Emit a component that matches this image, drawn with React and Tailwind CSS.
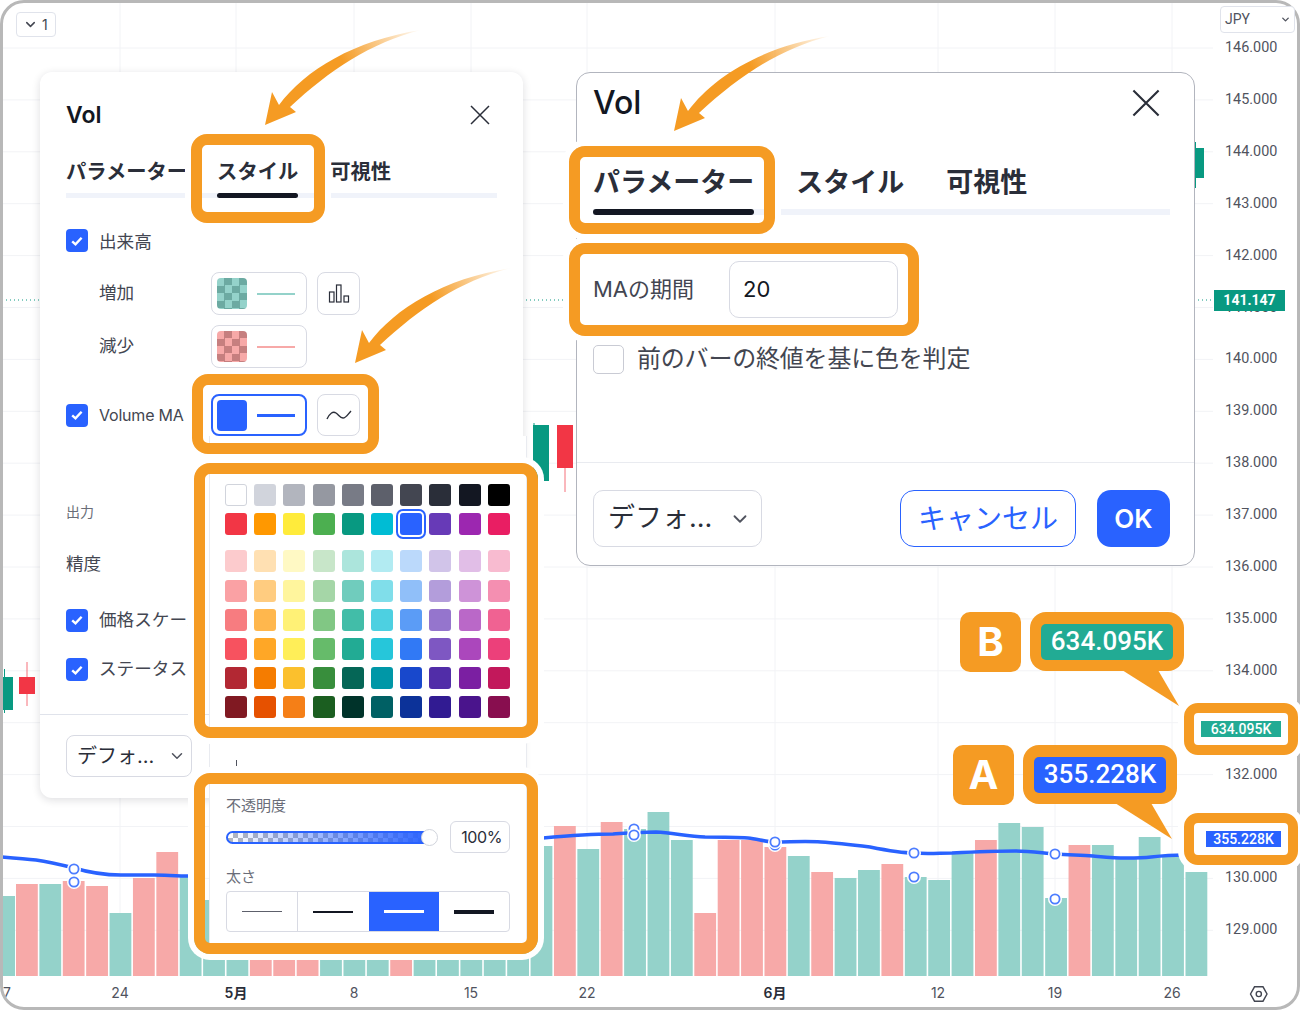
import { ChevronDown } from "lucide-react";

const ORANGE = "#f59b23";

const prices = ["146", "145", "144", "143", "142", "141", "140", "139", "138", "137", "136", "135", "134", "133", "132", "131", "130", "129"];
const hiddenPrices = ["133", "131"]; // sit under the axis highlights
const timeLabels = [
  [7, "7"], [120, "24"], [236, "5月", true], [354, "8"], [471, "15"], [587, "22"],
  [775, "6月", true], [938, "12"], [1055, "19"], [1172, "26"],
];
const gridX = [120, 236, 354, 471, 587, 775, 938, 1055, 1172];

// volume bars: [top y, red?]
const bars = [
  [896, 0], [884, 1], [884, 0], [881, 1], [886, 1], [913, 0], [878, 1], [852, 1], [876, 0], [900, 0],
  [900, 0], [900, 1], [900, 1], [900, 1], [900, 0], [900, 0], [900, 0], [900, 1], [900, 0], [900, 0],
  [900, 0], [900, 0], [900, 0], [846, 0], [826, 1], [849, 0], [822, 1], [829, 0], [812, 0], [840, 0],
  [913, 1], [840, 1], [840, 1], [847, 1], [856, 0], [872, 1], [878, 0], [870, 0], [864, 1], [877, 0],
  [880, 0], [853, 0], [840, 1], [823, 0], [827, 0], [898, 0], [845, 1], [845, 0], [857, 0], [837, 0],
  [857, 0], [872, 0],
];

const maLeft = "M2 857 C14 858 26 859 36 860 C50 862 62 865 74 868 C84 871 100 875 121 875 C134 875 145 875 154 875 C165 875 176 876 190 876";
const maRight = "M543 838 C565 836 590 834 613 834 C628 833 642 832 656 832 C672 833 688 836 705 837 C720 837 735 837 748 838 C758 839 766 842 775 842 C790 842 806 841 821 842 C838 843 854 845 870 847 C885 850 900 853 914 853 C928 854 940 853 952 853 C972 852 995 851 1015 851 C1030 851 1042 853 1056 854 C1070 855 1082 855 1093 856 C1105 857 1115 858 1126 858 C1135 858 1143 858 1151 857 C1160 856 1170 855 1184 855";
const maDots = [[74, 869], [74, 882], [634, 829], [634, 835], [775, 845], [775, 842], [914, 853], [914, 877], [1055, 854], [1055, 899]];

const palette = [
  ["#ffffff", "#d1d4dc", "#b2b5be", "#9598a1", "#787b86", "#5d606b", "#434651", "#2a2e39", "#131722", "#000000"],
  ["#f23645", "#ff9800", "#ffeb3b", "#4caf50", "#089981", "#00bcd4", "#2962ff", "#673ab7", "#9c27b0", "#e91e63"],
  ["#fccbcd", "#ffe0b2", "#fff9c4", "#c8e6c9", "#ace5dc", "#b2ebf2", "#bbd9fb", "#d1c4e9", "#e1bee7", "#f8bbd0"],
  ["#faa1a4", "#ffcc80", "#fff59d", "#a5d6a7", "#70ccbd", "#80deea", "#90bff9", "#b39ddb", "#ce93d8", "#f48fb1"],
  ["#f77c80", "#ffb74d", "#fff176", "#81c784", "#42bda8", "#4dd0e1", "#5b9cf6", "#9575cd", "#ba68c8", "#f06292"],
  ["#f7525f", "#ffa726", "#ffee58", "#66bb6a", "#22ab94", "#26c6da", "#3179f5", "#7e57c2", "#ab47bc", "#ec407a"],
  ["#b22833", "#f57c00", "#fbc02d", "#388e3c", "#056656", "#0097a7", "#1848cc", "#512da8", "#7b1fa2", "#c2185b"],
  ["#801922", "#e65100", "#f57f17", "#1b5e20", "#00332a", "#006064", "#0c3299", "#311b92", "#4a148c", "#880e4f"],
];

function Chart() {
  return (
    <svg className="absolute inset-0" width="1300" height="1010" viewBox="0 0 1300 1010">
      {prices.map((p, i) => (
        <line key={p} x1="2" x2="1213" y1={48 + i * 51.9} y2={48 + i * 51.9} stroke="#f2f3f6" />
      ))}
      {gridX.map((x) => (
        <line key={x} x1={x} x2={x} y1="2" y2="976" stroke="#f2f3f6" />
      ))}
      <line x1="2" x2="1213" y1="300" y2="300" stroke="#089981" strokeDasharray="1 3" />

      {/* candles */}
      <path d="M4.5 669V713M534 423V481M1195.5 142V188" stroke="#089981" />
      <rect x="3" y="677" width="10" height="33" fill="#089981" />
      <rect x="533" y="425" width="16" height="56" fill="#089981" />
      <rect x="1196" y="148" width="8" height="30" fill="#089981" />
      <path d="M27 662V706M565 425V492" stroke="#f23645" opacity="0.7" />
      <rect x="19" y="677" width="16" height="17" fill="#f23645" />
      <rect x="557" y="425" width="16" height="43" fill="#f23645" />

      {/* volume */}
      {bars.map(([top, red], i) => {
        const x = i === 0 ? 2.5 : 16 + (i - 1) * 23.39;
        const w = i === 0 ? 12.5 : 21.8;
        return <rect key={i} x={x} y={top} width={w} height={976 - top} fill={red ? "#f7a9a8" : "#94d2ca"} />;
      })}
      <path d={maLeft} fill="none" stroke="#2962ff" strokeWidth="3.5" />
      <path d={maRight} fill="none" stroke="#2962ff" strokeWidth="3.5" />
      {maDots.map(([x, y], i) => (
        <g key={i}>
          <circle cx={x} cy={y} r="7" fill="#fff" />
          <circle cx={x} cy={y} r="4.6" fill="#fff" stroke="#4d7dff" strokeWidth="1.8" />
        </g>
      ))}

      {timeLabels.map(([x, t, bold]) => (
        <text key={t} x={x} y="998" textAnchor="middle" fontSize="14" fontWeight={bold ? 600 : 400} fill={bold ? "#2a2e39" : "#50535e"}>
          {t}
        </text>
      ))}
      <path d="M1250.5 994L1254.5 986.8H1263L1267 994L1263 1001.2H1254.5Z" fill="none" stroke="#434651" strokeWidth="1.4" />
      <circle cx="1258.8" cy="994" r="2.6" fill="none" stroke="#434651" strokeWidth="1.4" />
    </svg>
  );
}

function Arrow({ className }) {
  return (
    <svg className={`absolute z-30 ${className}`} width="162" height="102" viewBox="0 0 162 102">
      <defs>
        <linearGradient id="arrowFade" gradientUnits="userSpaceOnUse" x1="40" y1="60" x2="160" y2="3">
          <stop offset="0" stopColor={ORANGE} />
          <stop offset="0.35" stopColor={ORANGE} />
          <stop offset="1" stopColor={ORANGE} stopOpacity="0" />
        </linearGradient>
      </defs>
      <path d="M2 98L9 65L16 78C42 43 92 13 158 3C107 16 67 43 27 80L33 85Z" fill="url(#arrowFade)" />
    </svg>
  );
}

function Highlight({ className }) {
  return (
    <div className={`absolute z-20 rounded-[16px] border-[11px] border-[#f59b23] shadow-[0_0_0_6px_white] pointer-events-none ${className}`} />
  );
}

function Check() {
  return (
    <span className="flex w-[22px] h-[23px] shrink-0 items-center justify-center rounded-[4px] bg-[#2962ff]">
      <svg width="16" height="16" viewBox="0 0 16 16">
        <path d="M3.2 8.4L6.5 11.4L12.6 4.8" fill="none" stroke="#fff" strokeWidth="2.4" />
      </svg>
    </span>
  );
}

function CloseIcon({ size }) {
  return (
    <svg width={size} height={size} viewBox="0 0 20 20">
      <path d="M1 1L19 19M19 1L1 19" stroke="#2a2e39" strokeWidth="1.5" fill="none" />
    </svg>
  );
}

function ColorButton({ dark, light, line }) {
  return (
    <div className="flex w-[96px] h-[43px] items-center rounded-[8px] border border-[#d8dae3] pl-[5px]">
      <span
        className="w-[30px] h-[31px] rounded-[4px] bg-size-[15px_15px]"
        style={{ backgroundImage: `conic-gradient(${dark} 25%, ${light} 0 50%, ${dark} 0 75%, ${light} 0)` }}
      />
      <span className="ml-[10px] w-[38px] h-[2px]" style={{ backgroundColor: line }} />
    </div>
  );
}

function LeftDialog() {
  return (
    <div className="absolute left-[40px] top-[72px] w-[483px] h-[726px] rounded-[12px] bg-white shadow-[0_2px_8px_rgba(19,23,34,0.14)] pl-[26px] pr-[26px] pt-[23px] text-[#434651]">
      <div className="flex h-[40px] items-center justify-between pr-[7px]">
        <span className="text-[23px] font-semibold text-[#131722]">Vol</span>
        <CloseIcon size={20} />
      </div>

      <div className="relative mt-[20px] flex h-[43px] gap-[30px] border-b-[5px] border-[#f0f3fa] text-[20.3px] font-bold text-[#2a2e39]">
        <span className="leading-[34px]">パラメーター</span>
        <span className="relative leading-[34px]">
          スタイル
          <span className="absolute left-0 right-0 top-[38px] h-[5px] rounded-full bg-[#131722]" />
          <Highlight className="-left-[26px] -right-[27px] -top-[21px] h-[89px]" />
        </span>
        <span className="ml-[2px] leading-[34px]">可視性</span>
      </div>

      <div className="mt-[31px] flex h-[23px] items-center gap-[11px] text-[17.6px]">
        <Check />
        <span className="mt-[3px]">出来高</span>
      </div>

      <div className="mt-[20px] ml-[33px] flex items-center text-[17.6px]">
        <span className="w-[112px]">増加</span>
        <ColorButton dark="#6caaa2" light="#94d2ca" line="#94d2ca" />
        <div className="ml-[10px] flex w-[43px] h-[43px] items-center justify-center rounded-[8px] border border-[#d8dae3]">
          <svg width="22" height="20" viewBox="0 0 22 20" fill="none" stroke="#2a2e39" strokeWidth="1.2">
            <rect x="1.5" y="8" width="4.5" height="10" />
            <rect x="8.5" y="1" width="4.5" height="17" />
            <rect x="16" y="12" width="4.5" height="6" />
          </svg>
        </div>
      </div>

      <div className="mt-[10px] ml-[33px] flex items-center text-[17.6px]">
        <span className="w-[112px]">減少</span>
        <ColorButton dark="#c67f7f" light="#f7a9a8" line="#f7a9a8" />
      </div>

      <div className="relative mt-[26px] flex items-center">
        <Check />
        <span className="ml-[11px] w-[112px] text-[16px] tracking-[-0.2px]">Volume MA</span>
        <div className="flex w-[96px] h-[42px] items-center rounded-[8px] border-2 border-[#2962ff] pl-[4px]">
          <span className="w-[30px] h-[31px] rounded-[4px] bg-[#2962ff]" />
          <span className="ml-[10px] w-[38px] h-[3px] bg-[#2962ff]" />
        </div>
        <div className="ml-[10px] flex w-[43px] h-[42px] items-center justify-center rounded-[8px] border border-[#d8dae3]">
          <svg width="26" height="14" viewBox="0 0 26 14" fill="none" stroke="#2a2e39" strokeWidth="1.4">
            <path d="M1 11C4 5 7 3 10 5C13 7 14 10 17 10C20 10 22 6 25 3" />
          </svg>
        </div>
        <Highlight className="left-[126px] top-[-20px] w-[187px] h-[80px]" />
      </div>

      <div className="mt-[66px] text-[14px] leading-[20px] text-[#6a6d78]">出力</div>
      <div className="mt-[30px] text-[17.6px] leading-[24px]">精度</div>

      <div className="mt-[31px] flex items-center gap-[11px] text-[17.6px]">
        <Check />
        <span className="w-[89px] overflow-hidden whitespace-nowrap">価格スケール</span>
      </div>
      <div className="mt-[23px] flex items-center gap-[11px] text-[17.6px]">
        <Check />
        <span className="w-[89px] overflow-hidden whitespace-nowrap">ステータスライン</span>
      </div>

      <div className="-mx-[26px] mt-[31px] h-px bg-[#e0e3eb]" />

      <div className="mt-[20px] flex w-[126px] h-[42px] items-center justify-between rounded-[8px] border border-[#d8dae3] pl-[10px] pr-[5px] text-[20px] text-[#2a2e39]">
        <span>デフォ...</span>
        <ChevronDown size={18} color="#50535e" />
      </div>
    </div>
  );
}

function ColorPopup() {
  return (
    <div className="absolute z-10 left-[209px] top-[436px] w-[318px] h-[507px] border-x border-[#e9ebf0] bg-white pl-[16px] pt-[48px] text-[#6a6d78]">
      <div className="-ml-px grid grid-cols-[repeat(10,22px)] gap-x-[7.2px] gap-y-[7.2px]">
        {palette.map((row, r) =>
          row.map((c) => (
            <span
              key={`${r}${c}`}
              className={`w-[22px] h-[22px] rounded-[3px] ${c === "#ffffff" ? "border border-[#d1d4dc]" : ""} ${c === "#2962ff" ? "ring-2 ring-[#2962ff] ring-offset-2" : ""} ${r === 2 ? "mt-[8px]" : ""}`}
              style={{ backgroundColor: c }}
            />
          ))
        )}
      </div>

      <div className="ml-[10px] mt-[42px] w-px h-[6px] bg-[#50535e]" />

      <div className="mt-[30px] text-[15px] leading-[20px]">不透明度</div>
      <div className="mt-[5px] flex h-[32px] w-[284px] items-center justify-between">
        <div className="relative h-[13px] w-[208px] rounded-full border-2 border-[#2962ff] bg-[linear-gradient(to_right,#2962ff00,#2962ff),conic-gradient(#b5b8c0_25%,#fff_0_50%,#b5b8c0_0_75%,#fff_0)] bg-size-[100%_100%,10px_10px]">
          <span className="absolute -right-[6px] -top-[4px] w-[17px] h-[17px] rounded-full border border-[#d1d4dc] bg-white" />
        </div>
        <div className="flex w-[60px] h-[32px] items-center justify-end rounded-[6px] border border-[#d8dae3] pr-[7px] text-[16px] tracking-[-0.4px] text-[#2a2e39]">
          100%
        </div>
      </div>

      <div className="mt-[14px] text-[15px] leading-[20px]">太さ</div>
      <div className="mt-[4px] flex h-[41px] w-[284px] overflow-hidden rounded-[4px] border border-[#d8dae3]">
        <div className="flex flex-1 items-center justify-center border-r border-[#d8dae3]">
          <span className="w-[40px] h-px bg-[#5d606b]" />
        </div>
        <div className="flex flex-1 items-center justify-center">
          <span className="w-[40px] h-[2px] bg-[#131722]" />
        </div>
        <div className="flex flex-1 items-center justify-center bg-[#2962ff]">
          <span className="w-[40px] h-[3px] bg-white" />
        </div>
        <div className="flex flex-1 items-center justify-center">
          <span className="w-[40px] h-[4px] bg-[#131722]" />
        </div>
      </div>

      <Highlight className="-left-[16px] top-[27px] w-[344px] h-[275px]" />
      <Highlight className="-left-[16px] top-[337px] w-[344px] h-[181px]" />
    </div>
  );
}

function RightDialog() {
  return (
    <div className="absolute left-[576px] top-[72px] flex w-[619px] h-[494px] flex-col rounded-[14px] border border-[#b2b5be] bg-white pl-[16px] pr-[24px] text-[#2a2e39]">
      <div className="flex h-[60px] shrink-0 items-center justify-between pr-[10px]">
        <span className="text-[32px] font-medium text-[#131722]">Vol</span>
        <CloseIcon size={28} />
      </div>

      <div className="relative mt-[27px] flex h-[55px] shrink-0 gap-[42px] border-b-[6px] border-[#f0f3fa] text-[27px] font-bold">
        <span className="relative leading-[46px]">
          パラメーター
          <span className="absolute left-0 right-0 top-[49px] h-[6px] rounded-full bg-[#131722]" />
          <Highlight className="-left-[24px] -right-[21px] -top-[14px] h-[88px]" />
        </span>
        <span className="leading-[46px]">スタイル</span>
        <span className="leading-[46px]">可視性</span>
      </div>

      <div className="relative mt-[46px] flex w-[305px] shrink-0 items-center text-[22px]">
        <span className="w-[136px] text-[#434651]">MAの期間</span>
        <div className="flex h-[57px] w-[169px] items-center rounded-[10px] border border-[#d8dae3] pl-[13px] text-[#131722]">20</div>
        <Highlight className="-left-[24px] -right-[21px] -top-[18px] h-[93px]" />
      </div>

      <div className="mt-[23px] flex shrink-0 items-center gap-[13px] text-[24px] text-[#434651]">
        <span className="w-[31px] h-[29px] rounded-[5px] border border-[#c9cbd4]" />
        <span className="tracking-[-0.2px]">前のバーの終値を基に色を判定</span>
      </div>

      <div className="-ml-[16px] -mr-[24px] mt-[85px] h-px shrink-0 bg-[#e9ebf0]" />

      <div className="mt-[27px] flex shrink-0 items-center">
        <div className="flex h-[57px] w-[169px] items-center justify-between rounded-[10px] border border-[#d8dae3] pl-[14px] pr-[10px] text-[27px]">
          <span>デフォ...</span>
          <ChevronDown size={22} color="#50535e" />
        </div>
        <div className="ml-auto flex h-[57px] w-[176px] items-center justify-center rounded-[14px] border border-[#2962ff] text-[28px] text-[#2962ff]">
          キャンセル
        </div>
        <div className="ml-[21px] flex h-[57px] w-[73px] items-center justify-center rounded-[14px] bg-[#2962ff] text-[26px] font-semibold text-white">
          OK
        </div>
      </div>
    </div>
  );
}

function Callout({ letter, value, tagClass, className }) {
  return (
    <div className={`absolute z-20 flex items-start ${className}`}>
      <div className="flex w-[61px] h-[60px] items-center justify-center rounded-[10px] bg-[#f59b23] text-[40px] font-bold text-white">
        {letter}
      </div>
      <div className="relative ml-[9px] flex w-[154px] h-[59px] items-center justify-center rounded-[16px] bg-[#f59b23]">
        <span className={`flex w-[132px] h-[36px] items-center justify-center rounded-[5px] font-['Roboto',sans-serif] text-[26px] font-medium text-white ${tagClass}`}>
          {value}
        </span>
        <svg className="absolute left-[91px] top-[58px]" width="62" height="38" viewBox="0 0 62 38">
          <path d="M1 0L58 36L37 0Z" fill="#f59b23" />
        </svg>
      </div>
    </div>
  );
}

function AxisTag({ value, tagClass, className }) {
  return (
    <div className={`absolute z-20 flex w-[114px] h-[52px] items-center justify-end rounded-[14px] border-[10px] border-[#f59b23] bg-white pr-[7px] shadow-[0_0_0_6px_white] ${className}`}>
      <span className={`flex h-[16px] items-center justify-center font-['Roboto',sans-serif] text-[14px] font-medium text-white ${tagClass}`}>
        {value}
      </span>
    </div>
  );
}

export default function App() {
  return (
    <div className="relative w-[1300px] h-[1010px] overflow-hidden bg-white font-['Inter','Noto_Sans_CJK_JP',sans-serif]">
      <Chart />
      <div className="absolute inset-0 rounded-[24px] border-[3px] border-[#b8b8b8] pointer-events-none" />

      {/* price axis */}
      <div className="absolute right-0 top-0 w-[88px] pt-[22px] pl-[13px] font-['Roboto',sans-serif] text-[14.4px] text-[#50535e]">
        {prices.map((p) => (
          <div key={p} className="flex h-[51.9px] items-center">
            {hiddenPrices.includes(p) ? "" : `${p}.000`}
          </div>
        ))}
      </div>
      <div className="absolute left-[1214px] top-[290px] flex w-[71px] h-[21px] items-center justify-center bg-[#089981] font-['Roboto',sans-serif] text-[14px] font-bold text-white">
        141.147
      </div>

      <div className="absolute left-[16px] top-[12px] flex w-[40px] h-[25px] items-center gap-[4px] rounded-[4px] border border-[#e0e3eb] bg-white pl-[6px] text-[14px] text-[#434651]">
        <ChevronDown size={15} strokeWidth={2.4} />
        <span>1</span>
      </div>
      <div className="absolute left-[1220px] top-[6px] flex w-[75px] h-[27px] items-center justify-between rounded-[4px] border border-[#e0e3eb] bg-white pl-[4px] pr-[3px] font-['Roboto',sans-serif] text-[14px] text-[#50535e]">
        <span>JPY</span>
        <ChevronDown size={11} strokeWidth={3} />
      </div>

      <LeftDialog />
      <ColorPopup />
      <RightDialog />

      <Arrow className="left-[263px] top-[27px]" />
      <Arrow className="left-[353px] top-[265px]" />
      <Arrow className="left-[672px] top-[33px]" />

      <Callout letter="B" value="634.095K" tagClass="bg-[#22ab94]" className="left-[960px] top-[612px]" />
      <Callout letter="A" value="355.228K" tagClass="bg-[#2962ff]" className="left-[953px] top-[745px]" />
      <AxisTag value="634.095K" tagClass="bg-[#22ab94] w-[80px]" className="left-[1184px] top-[703px]" />
      <AxisTag value="355.228K" tagClass="bg-[#2962ff] w-[75px]" className="left-[1184px] top-[813px]" />
    </div>
  );
}
